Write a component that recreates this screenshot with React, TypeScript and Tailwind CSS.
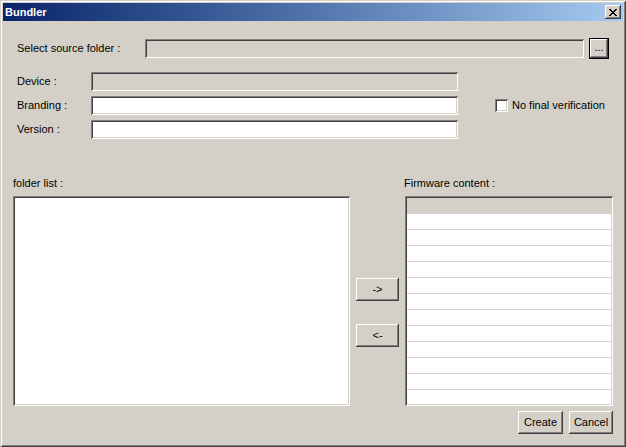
const raised =
  "shadow-[inset_-1px_-1px_#404040,inset_1px_1px_#ffffff,inset_-2px_-2px_#808080,inset_2px_2px_#d4d0c8]";
const sunken =
  "shadow-[inset_1px_1px_#808080,inset_-1px_-1px_#ffffff,inset_2px_2px_#404040,inset_-2px_-2px_#d4d0c8]";

const Btn = ({ label, w }: { label: string; w: string }) => (
  <button
    className={`${w} h-[23px] bg-[#d4d0c8] ${raised} flex items-center justify-center leading-none`}
  >
    {label}
  </button>
);

const Field = ({ disabled }: { disabled?: boolean }) => (
  <div
    className={`w-[367px] h-[19px] ${sunken} ${disabled ? "bg-[#d4d0c8]" : "bg-white"}`}
  />
);

const App = () => {
  const rows = Array.from({ length: 12 });

  return (
    <div className="w-[626px] h-[447px] bg-[#d4d0c8] p-[3px] flex flex-col font-['Liberation_Sans',Arial,sans-serif] text-[11px] text-black shadow-[inset_1px_1px_#d4d0c8,inset_-1px_-1px_#404040,inset_2px_2px_#ffffff,inset_-2px_-2px_#808080]">
      {/* title bar */}
      <div className="h-[18px] flex items-center justify-between pl-[2px] pr-[2px] bg-linear-to-r from-[#0a246a] to-[#a6caf0]">
        <span className="text-white font-bold leading-none">Bundler</span>
        <button
          className={`w-[16px] h-[14px] bg-[#d4d0c8] ${raised} flex items-center justify-center`}
        >
          <svg width="8" height="7" viewBox="0 0 8 7" shapeRendering="crispEdges">
            <path
              d="M0 0 L2 0 L4 2.5 L6 0 L8 0 L5 3.5 L8 7 L6 7 L4 4.5 L2 7 L0 7 L3 3.5 Z"
              fill="#000"
            />
          </svg>
        </button>
      </div>

      {/* top form */}
      <div className="pt-[17px] pl-[14px] flex flex-col">
        <div className="flex items-center h-[21px]">
          <span className="w-[128px]">Select source folder :</span>
          <div className={`w-[439px] h-[19px] bg-[#d4d0c8] ${sunken}`} />
          <div className="ml-[5px] w-[20px] h-[21px] border border-black">
            <button
              className={`w-full h-full bg-[#d4d0c8] ${raised} flex items-center justify-center leading-none pb-[2px]`}
            >
              ...
            </button>
          </div>
        </div>

        <div className="mt-[13px] flex flex-col gap-[5px]">
          <div className="flex items-center h-[19px]">
            <span className="w-[74px]">Device :</span>
            <Field disabled />
          </div>
          <div className="flex items-center h-[19px]">
            <span className="w-[74px]">Branding :</span>
            <Field />
            <div className={`ml-[37px] w-[13px] h-[13px] bg-white ${sunken}`} />
            <span className="ml-[4px]">No final verification</span>
          </div>
          <div className="flex items-center h-[19px]">
            <span className="w-[74px]">Version :</span>
            <Field />
          </div>
        </div>
      </div>

      {/* lists */}
      <div className="mt-[38px] pl-[10px] flex">
        <div className="w-[337px] flex flex-col">
          <span className="h-[13px] leading-[13px]">folder list :</span>
          <div className={`mt-[6px] h-[210px] bg-white ${sunken}`} />
        </div>

        <div className="ml-[6px] w-[43px] pt-[101px] flex flex-col gap-[23px]">
          <Btn label="->" w="w-[43px]" />
          <Btn label="<-" w="w-[43px]" />
        </div>

        <div className="ml-[6px] w-[208px] flex flex-col">
          <span className="h-[13px] leading-[13px] -ml-[1px]">Firmware content :</span>
          <div className={`mt-[6px] h-[210px] bg-white p-[2px] ${sunken}`}>
            <div className="h-full overflow-hidden">
              <div className="h-[16px] bg-[#d4d0c8]" />
              {rows.map((_, i) => (
                <div key={i} className="h-[16px] border-b border-[#d4d0c8]" />
              ))}
            </div>
          </div>
        </div>
      </div>

      {/* footer buttons */}
      <div className="mt-[5px] pr-[10px] flex justify-end gap-[6px]">
        <Btn label="Create" w="w-[45px]" />
        <Btn label="Cancel" w="w-[44px]" />
      </div>
    </div>
  );
};

export default App;
